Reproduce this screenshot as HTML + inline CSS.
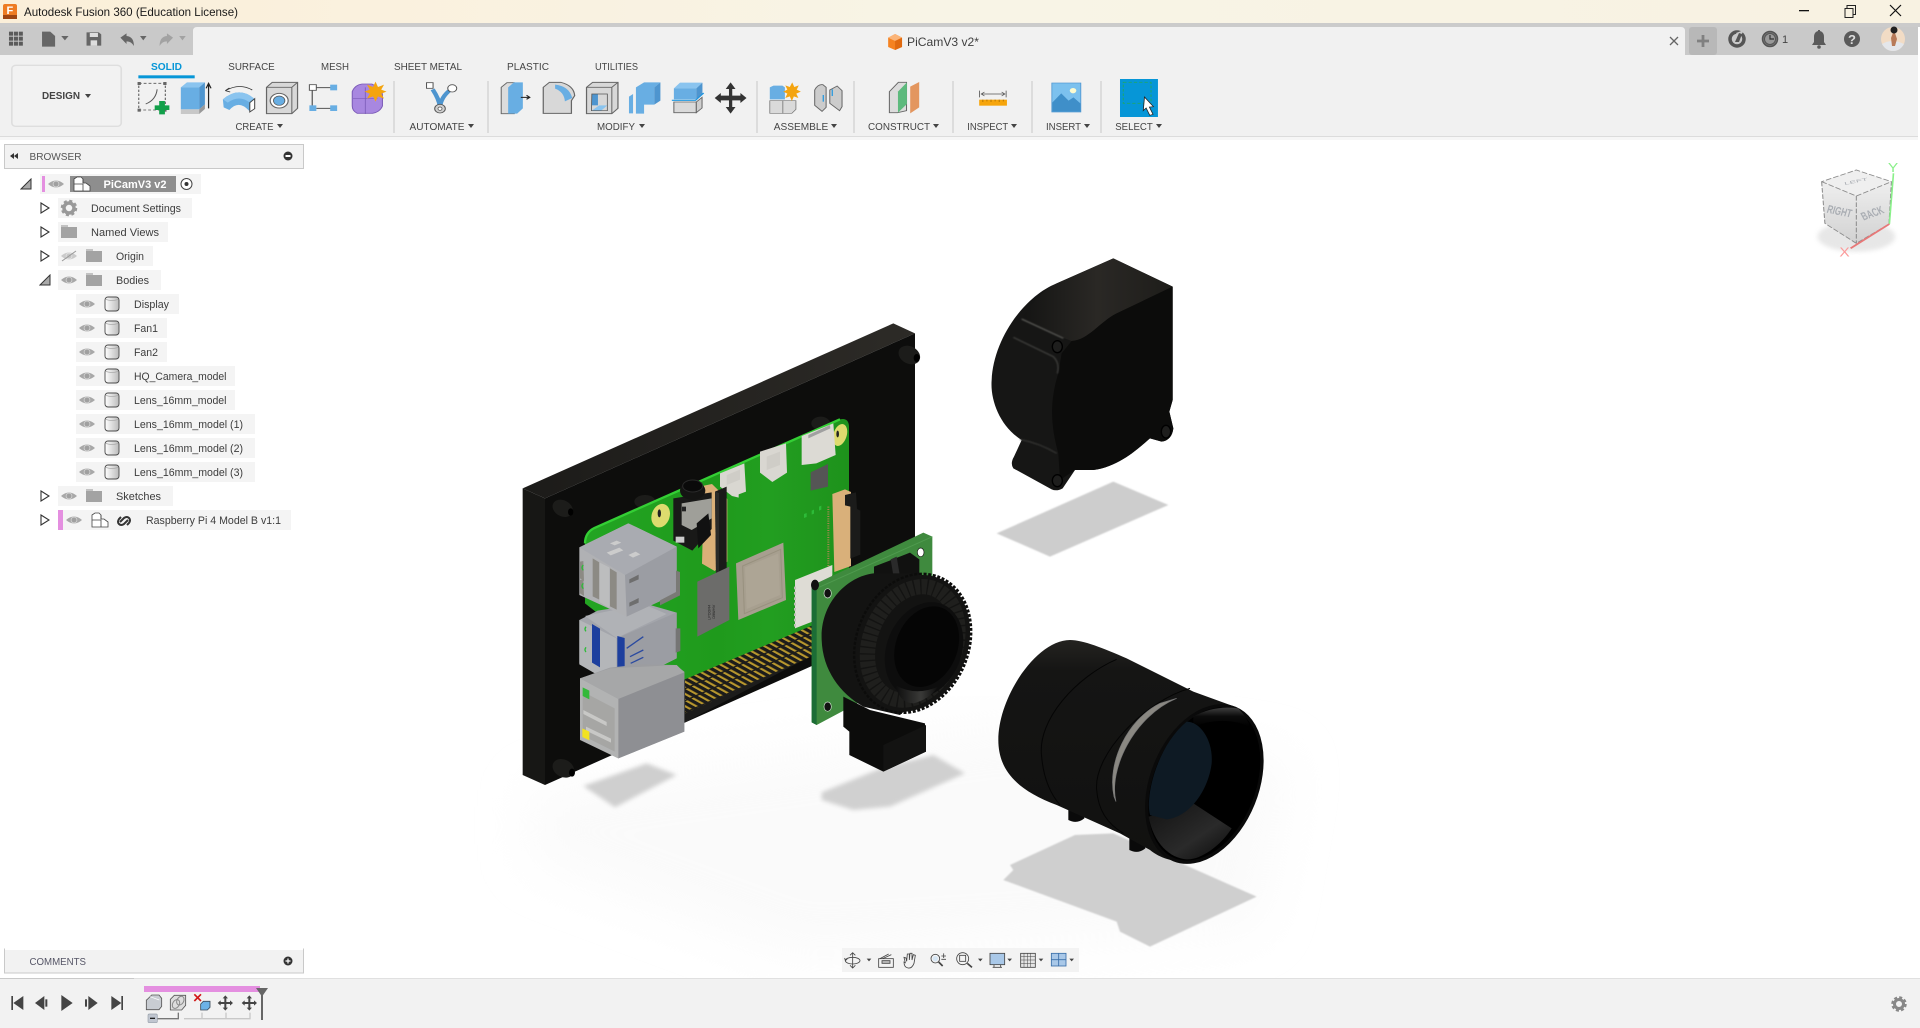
<!DOCTYPE html>
<html lang="en"><head><meta charset="utf-8"><title>Autodesk Fusion 360</title>
<style>
html,body{margin:0;padding:0;background:#fff;width:1920px;height:1028px;overflow:hidden}
svg{display:block}
text{font-family:"Liberation Sans",sans-serif;fill:#3f3f3f}
.l{font-size:10px;fill:#444;text-anchor:middle}
.r{font-size:10.6px;fill:#3d3d3d}
</style></head><body>
<svg width="1920" height="1028" viewBox="0 0 1920 1028" xmlns="http://www.w3.org/2000/svg">
<defs>
<filter id="b2"><feGaussianBlur stdDeviation="2"/></filter>
<filter id="b20"><feGaussianBlur stdDeviation="25"/></filter>
<filter id="b6"><feGaussianBlur stdDeviation="6"/></filter>
<linearGradient id="cream" x1="0" x2="1" y1="0" y2="0"><stop offset="0" stop-color="#fbefd9"/><stop offset=".5" stop-color="#f8f4e6"/><stop offset="1" stop-color="#f8f2e2"/></linearGradient>
<linearGradient id="brd" x1="0" x2="1" y1="0" y2="0"><stop offset="0" stop-color="#23a522"/><stop offset=".5" stop-color="#1f9a1c"/><stop offset=".7" stop-color="#229e20"/><stop offset="1" stop-color="#1e921c"/></linearGradient>
<linearGradient id="ptop" x1="0" x2="1" y1="0" y2="0"><stop offset="0" stop-color="#1c1b19"/><stop offset="1" stop-color="#2d2b27"/></linearGradient>
<linearGradient id="ftop" x1="0" x2="1" y1="0" y2="0"><stop offset="0" stop-color="#141413"/><stop offset=".5" stop-color="#2a2825"/><stop offset="1" stop-color="#1e1d1a"/></linearGradient>
<linearGradient id="lens" x1="0" x2="0" y1="0" y2="1"><stop offset="0" stop-color="#242320"/><stop offset=".14" stop-color="#151514"/><stop offset="1" stop-color="#111110"/></linearGradient>
<linearGradient id="in1" x1="0" x2="0" y1="0" y2="1"><stop offset="0" stop-color="#5a5a5a"/><stop offset=".45" stop-color="#111"/><stop offset="1" stop-color="#000"/></linearGradient>
<linearGradient id="in2" x1="0" x2="1" y1="0" y2="1"><stop offset="0" stop-color="#121212"/><stop offset=".6" stop-color="#2a2a2a"/><stop offset="1" stop-color="#0a0a0a"/></linearGradient>
<linearGradient id="in3" x1="0" x2="1" y1="0" y2="0"><stop offset="0" stop-color="#0c0c0c"/><stop offset=".6" stop-color="#3a3a38"/><stop offset="1" stop-color="#0c0c0c"/></linearGradient>
<linearGradient id="cube" x1="0" x2="0" y1="0" y2="1"><stop offset="0" stop-color="#f4f4f4"/><stop offset="1" stop-color="#d2d2d2"/></linearGradient>
<linearGradient id="body" x1="0" x2="1" y1="0" y2="0"><stop offset="0" stop-color="#fff"/><stop offset="1" stop-color="#bbb"/></linearGradient>
<pattern id="pins" patternUnits="userSpaceOnUse" width="10" height="10" patternTransform="matrix(1.85 -.81 3.6 2 555 1100)"><rect x="0" y="0.700" width="4.200" height="8.700" fill="#b8982f"/><rect x="3.400" y="0.700" width=".8" height="8.700" fill="#6e5718"/></pattern>
<symbol id="eye" viewBox="-9 -6 18 12" width="18" height="12" overflow="visible"><path d="M-8 0Q0-7 8 0Q0 7-8 0Z" fill="#a8a8a8"/><circle r="3.300" fill="#d4d4d4"/><circle r="2.500" fill="#a0a0a0"/></symbol>
<symbol id="folder" viewBox="0 0 16 13" width="16" height="13"><path d="M0 0h7v2h9v11H0z" fill="#a3a3a3"/><path d="M0 2h7V0H0z" fill="#c2c2c2"/></symbol>
<symbol id="bd" viewBox="0 0 16 16" width="16" height="16"><rect x="1" y="1" width="14" height="14" rx="3" fill="url(#body)" stroke="#4a4a4a" stroke-width=".9"/><path d="M2 3.500Q8 5.500 14 3.500" fill="none" stroke="#aaa" stroke-width=".7"/></symbol>
<symbol id="comp" viewBox="0 0 18 16" width="18" height="16"><path d="M1 7V3l3-2h4l2 2v4h3l4 3v5H1z" fill="#fff" stroke="#444" stroke-width=".8"/><path d="M1 8h9v7M10 3v4" fill="none" stroke="#444" stroke-width=".8"/></symbol>
<symbol id="tri" viewBox="0 0 10 12" width="10" height="12"><path d="M1 1L9 6L1 11Z" fill="#fff" stroke="#333" stroke-width="1.100"/></symbol>
<symbol id="tridn" viewBox="0 0 12 12" width="12" height="12"><path d="M1 11L11 1V11Z" fill="#aaa" stroke="#333" stroke-width="1"/></symbol>
</defs>

<!-- chrome -->
<rect width="1920" height="23" fill="url(#cream)"/>
<rect y="23" width="1920" height="4" fill="#cbcbcb"/>
<rect y="27" width="1918" height="28" fill="#c9c9c9"/>
<path d="M193 55V31q0-4 4-4H1681q4 0 4 4V55z" fill="#f1f1f1"/>
<rect x="1689" y="27" width="28" height="28" rx="3" fill="#b8b8b8"/>
<rect y="55" width="1918" height="81" fill="#f1f1f1"/>
<rect y="136" width="1918" height="1" fill="#dcdcdc"/>
<rect y="137" width="1918" height="3" fill="#f6f6f6"/>

<!-- title bar -->
<rect x="3" y="4" width="14" height="15" rx="2" fill="#ee7b22"/><rect x="3" y="15" width="14" height="4" fill="#9e4512"/>
<text x="6.500" y="14" font-size="11" font-weight="700" style="fill:#fff">F</text>
<text x="24" y="16" font-size="12" textLength="214" lengthAdjust="spacingAndGlyphs" style="fill:#1a1a1a">Autodesk Fusion 360 (Education License)</text>
<rect x="1799" y="10" width="10" height="1.300" fill="#111"/>
<path d="M1845 8.500h8v9h-8zM1847 8V5.500h8.500v9H1853" fill="none" stroke="#222" stroke-width="1"/>
<path d="M1890 5l11 11M1901 5l-11 11" stroke="#111" stroke-width="1.200"/>

<!-- toolbar left icons & tabs zoomed coordinates -->
<g transform="scale(.40816,.33333)">
<g fill="#5a5a5a"><rect x="22" y="95" width="10" height="12"/><rect x="34" y="95" width="10" height="12"/><rect x="46" y="95" width="10" height="12"/><rect x="22" y="110" width="10" height="12"/><rect x="34" y="110" width="10" height="12"/><rect x="46" y="110" width="10" height="12"/><rect x="22" y="125" width="10" height="12"/><rect x="34" y="125" width="10" height="12"/><rect x="46" y="125" width="10" height="12"/></g>
<path d="M103 95h20l12 13v32h-32z" fill="#666"/><path d="M150 108h18l-9 13z" fill="#666"/>
<path d="M212 97h30l6 6v34h-36z" fill="#666"/><rect x="220" y="99" width="20" height="12" fill="#ddd"/><rect x="222" y="121" width="16" height="16" fill="#ddd"/>
<path d="M295 113l15-13v8q18 2 18 30q-6-14-18-14v8z" fill="#666"/><path d="M343 108h16l-8 13z" fill="#666"/>
<path d="M424 113l-15-13v8q-18 2-18 30q6-14 18-14v8z" fill="#a2a2a2"/><path d="M439 108h16l-8 13z" fill="#a2a2a2"/>

<rect x="29" y="196" width="268" height="183" rx="10" fill="#f2f2f2" stroke="#dedede" stroke-width="4"/>
<rect x="339" y="226" width="138" height="9" fill="#0696d7"/>

<!-- sketch -->
<rect x="340" y="250" width="65" height="80" fill="none" stroke="#555" stroke-width="2.500" stroke-dasharray="7 5"/>
<g fill="#666"><rect x="337" y="246" width="8" height="9"/><rect x="400" y="246" width="8" height="9"/><rect x="337" y="326" width="8" height="9"/><rect x="400" y="326" width="8" height="9"/></g>
<path d="M385 268Q382 300 357 312" fill="none" stroke="#555" stroke-width="2.500"/>
<path d="M390 303h14v13h11v14h-11v13h-14v-13h-11v-14h11z" fill="#12a04a"/>
<!-- extrude -->
<path d="M443 262l15-15h44l-14 15z" fill="#8ac4ef"/><rect x="443" y="262" width="45" height="66" fill="#68aee3"/><path d="M488 262l14-15v66l-14 15z" fill="#4e95cf"/><path d="M443 328h45v14h-45z" fill="#c8c8c8"/><path d="M488 328l14-15v14l-14 15z" fill="#999"/>
<path d="M511 325V252M505 265l6-15 6 15" fill="none" stroke="#222" stroke-width="3"/>
<!-- revolve -->
<path d="M546 298Q585 258 622 295V325L610 332Q585 298 562 330L548 322Z" fill="#68aee3"/><path d="M546 298Q585 258 622 295L610 306Q585 284 558 308Z" fill="#8ac4ef"/>
<path d="M612 308l12-12v30l-12 10z" fill="#fff" stroke="#444" stroke-width="2.500"/>
<path d="M552 272q35-24 66-2M552 272l10-8M552 272l12 4" fill="none" stroke="#333" stroke-width="2.500"/>
<!-- hole -->
<path d="M653 262l14-15h62v78l-14 16h-62z" fill="#d8d8d8" stroke="#666" stroke-width="3"/><path d="M653 262h62v79M715 262l14-15" fill="none" stroke="#666" stroke-width="2.500"/>
<ellipse cx="684" cy="302" rx="22" ry="22" fill="#fff" stroke="#666" stroke-width="3"/><ellipse cx="684" cy="302" rx="14" ry="14" fill="#68aee3" stroke="#555" stroke-width="2"/>
<!-- pattern -->
<path d="M775 263h42M765 270v47M775 325h42" stroke="#555" stroke-width="3"/>
<rect x="758" y="254" width="17" height="17" fill="#fff" stroke="#555" stroke-width="2.500"/>
<rect x="809" y="254" width="17" height="17" fill="#68aee3"/><rect x="758" y="316" width="17" height="17" fill="#68aee3"/><rect x="809" y="316" width="17" height="17" fill="#68aee3"/>
<!-- form -->
<path d="M863 275q6-20 24-23h24q26 14 26 34v32q-6 18-24 22h-38q-12-8-12-22z" fill="#a887e0" stroke="#7c5bb8" stroke-width="2.500"/>
<path d="M865 295h60M895 262v80" stroke="#7c5bb8" stroke-width="2"/>
<path d="M920 245l6 16 15-7-7 15 13 6-13 6 7 15-15-7-6 16-6-16-15 7 7-15-13-6 13-6-7-15 15 7z" fill="#f4a40f"/>
<!-- automate -->
<path d="M1060 268q16 30 18 52M1105 268q-24 22-27 52" fill="none" stroke="#4e95cf" stroke-width="11"/>
<rect x="1045" y="248" width="16" height="17" fill="#fff" stroke="#555" stroke-width="2.500"/><circle cx="1108" cy="265" r="11" fill="#fff" stroke="#555" stroke-width="2.500"/>
<ellipse cx="1078" cy="326" rx="13" ry="13" fill="#d0d0d0" stroke="#555" stroke-width="2.500"/><circle cx="1078" cy="326" r="5" fill="#fff" stroke="#555" stroke-width="2"/>
<!-- press pull -->
<path d="M1228 262l14-14h18v93h-32z" fill="#dcdcdc" stroke="#666" stroke-width="2.500"/><path d="M1245 262l14-15h22v78l-14 16h-22z" fill="#68aee3"/>
<path d="M1276 292h22M1290 286l8 6-8 6" fill="none" stroke="#222" stroke-width="3"/>
<!-- fillet -->
<path d="M1331 262l15-15h28q32 10 34 40l-8 15v38h-69z" fill="#d8d8d8" stroke="#666" stroke-width="3"/><path d="M1360 254q34 4 42 40l-18 10q-2-28-24-38z" fill="#68aee3"/>
<!-- shell -->
<path d="M1437 262l15-15h62v78l-15 16h-62z" fill="#d8d8d8" stroke="#666" stroke-width="3"/><path d="M1437 262h62v79M1499 262l15-15" fill="none" stroke="#666" stroke-width="2.500"/>
<path d="M1450 282h15v34h-15z" fill="#4e95cf"/><path d="M1450 332l18-16h20l-15 16z" fill="#8ac4ef"/><path d="M1450 282l-1 50h39v-50z" fill="none" stroke="#555" stroke-width="2"/>
<path d="M1541 340v-50l10-8v58z" fill="#68aee3"/>
</g>

<g transform="translate(640,0) scale(.40816,.33333)">
<path d="M-10 262l20-15h40l-15 15v52h-25v27h-20z" fill="#68aee3"/><path d="M35 262l15-15v55l-15 12z" fill="#4e95cf"/>
<path d="M83 265l15-17h55l-15 17z" fill="#8ac4ef"/><rect x="83" y="265" width="55" height="33" fill="#68aee3"/><path d="M138 265l15-17v35l-15 15z" fill="#4e95cf"/>
<path d="M78 301h58l20-22" fill="none" stroke="#1e96e0" stroke-width="3.500"/>
<path d="M83 306h55v32H83z" fill="#dadada" stroke="#666" stroke-width="2.500"/><path d="M138 306l14-14v32l-14 14z" fill="#cfcfcf" stroke="#666" stroke-width="2.500"/>
<path d="M222 247l12 20h-8v20h20v-8l15 15-15 15v-8h-20v20h8l-12 20-12-20h8v-20h-20v8l-15-15 15-15v8h20v-20h-8z" fill="#333"/>
<path d="M318 262l9-5h22l6 5v36h-37z" fill="#68aee3"/><path d="M318 302h32v38h-32z" fill="#dadada" stroke="#777" stroke-width="2"/><path d="M350 302h32v26l-10 12h-22z" fill="#dadada" stroke="#777" stroke-width="2"/>
<path d="M373 247l5 14 11-5-5 13 10 6-11 6 5 13-11-5-5 14-5-14-11 5 5-13-10-6 10-6-5-13 11 5z" fill="#f4a40f"/>
<path d="M428 270q8-18 20-16l8 8v60l-10 12-18-18z" fill="#ccc" stroke="#666" stroke-width="2.500"/><path d="M465 270l18-12 12 14v48l-6 12-24-22z" fill="#ccc" stroke="#666" stroke-width="2.500"/>
<path d="M449 285v20" stroke="#1e96e0" stroke-width="3"/><path d="M471 268v20" stroke="#1e96e0" stroke-width="3"/>
<path d="M611 275l22-28h20v85l-22 6h-20z" fill="#dcdcdc" stroke="#666" stroke-width="2.500"/><path d="M632 275l22-28v65l-22 26z" fill="#5dba7d"/>
<path d="M662 260l22-14v76l-22 18z" fill="#e3965f"/>
<path d="M832 272v20M897 272v20M836 282h58M844 276l-8 6 8 6M886 276l8 6-8 6" fill="none" stroke="#555" stroke-width="2"/>
<rect x="831" y="299" width="68" height="18" fill="#f6a50c"/><path d="M840 299v7M850 299v5M860 299v7M870 299v5M880 299v7M890 299v5" stroke="#a86c00" stroke-width="2"/>
<rect x="1009" y="249" width="71" height="87" fill="#7cc1ee" stroke="#4e95cf" stroke-width="2"/>
<path d="M1010 335v-27l22-28 18 22 12-10 17 18v25z" fill="#3f8fc9"/><circle cx="1061" cy="272" r="8" fill="#fdfbd0"/>
<rect x="1176" y="237" width="93" height="114" fill="#0696d7"/>
<rect x="1184" y="247" width="68" height="63" fill="none" stroke="#1fa56c" stroke-width="2.500" stroke-dasharray="8 5"/>
<path d="M1236 291l22 29-10 1 9 22-8 3-9-22-7 8z" fill="#fff" stroke="#222" stroke-width="2"/>
<!-- doc cube -->
<path d="M625 102l17 11v28l-17 9-17-9v-28z" fill="#f58220"/><path d="M625 102l17 11-17 10-17-10z" fill="#fbb478"/><path d="M625 123l17-10v28l-17 9z" fill="#e06a10"/>
</g>

<!-- separators -->
<g fill="#dcdcdc"><rect x="393" y="81" width="2" height="52"/><rect x="487" y="81" width="2" height="52"/><rect x="756" y="81" width="2" height="52"/><rect x="853" y="81" width="2" height="52"/><rect x="952" y="81" width="2" height="52"/><rect x="1031" y="81" width="2" height="52"/><rect x="1100" y="81" width="2" height="52"/></g>

<!-- tabs text -->
<text x="166.500" y="70" class="l" textLength="31" lengthAdjust="spacingAndGlyphs" font-weight="700" style="fill:#0696d7">SOLID</text>
<text x="251.500" y="70" class="l" textLength="46.500" lengthAdjust="spacingAndGlyphs">SURFACE</text>
<text x="335" y="70" class="l" textLength="28" lengthAdjust="spacingAndGlyphs">MESH</text>
<text x="428" y="70" class="l" textLength="68" lengthAdjust="spacingAndGlyphs">SHEET METAL</text>
<text x="528" y="70" class="l" textLength="42" lengthAdjust="spacingAndGlyphs">PLASTIC</text>
<text x="616.500" y="70" class="l" textLength="43" lengthAdjust="spacingAndGlyphs">UTILITIES</text>
<text x="61" y="99" font-size="10.500" font-weight="700" text-anchor="middle" textLength="38" lengthAdjust="spacingAndGlyphs" style="fill:#444">DESIGN</text>
<path d="M85 94h6l-3 4z" fill="#444"/>

<text x="254.500" y="130" class="l" textLength="38" lengthAdjust="spacingAndGlyphs">CREATE</text><path d="M277 124h6l-3 4z" fill="#444"/>
<text x="437" y="130" class="l" textLength="55" lengthAdjust="spacingAndGlyphs">AUTOMATE</text><path d="M468 124h6l-3 4z" fill="#444"/>
<text x="616" y="130" class="l" textLength="38" lengthAdjust="spacingAndGlyphs">MODIFY</text><path d="M639 124h6l-3 4z" fill="#444"/>
<text x="801" y="130" class="l" textLength="54.500" lengthAdjust="spacingAndGlyphs">ASSEMBLE</text><path d="M831 124h6l-3 4z" fill="#444"/>
<text x="899" y="130" class="l" textLength="62" lengthAdjust="spacingAndGlyphs">CONSTRUCT</text><path d="M933 124h6l-3 4z" fill="#444"/>
<text x="987.700" y="130" class="l" textLength="41" lengthAdjust="spacingAndGlyphs">INSPECT</text><path d="M1011 124h6l-3 4z" fill="#444"/>
<text x="1063.500" y="130" class="l" textLength="35" lengthAdjust="spacingAndGlyphs">INSERT</text><path d="M1084 124h6l-3 4z" fill="#444"/>
<text x="1134" y="130" class="l" textLength="37.500" lengthAdjust="spacingAndGlyphs">SELECT</text><path d="M1156 124h6l-3 4z" fill="#444"/>

<!-- document tab text -->
<text x="907" y="46" font-size="12" textLength="72" lengthAdjust="spacingAndGlyphs" style="fill:#3f3f3f">PiCamV3 v2*</text>
<path d="M1670 37l8 8M1678 37l-8 8" stroke="#666" stroke-width="1.300"/>
<path d="M1697 41h12M1703 35v12" stroke="#808080" stroke-width="2.800"/>

<!-- right icons -->
<circle cx="1737" cy="39" r="7" fill="none" stroke="#555" stroke-width="3.500"/><path d="M1736 33l8-3-5 9z" fill="#c9c9c9"/><path d="M1735 42l4-9 3 1-3 8z" fill="#555"/>
<circle cx="1770" cy="39" r="7.500" fill="#777" stroke="#555" stroke-width="1.500"/><circle cx="1770" cy="39" r="5.500" fill="#999" stroke="#555" stroke-width="1"/><path d="M1770 35v4h4" fill="none" stroke="#333" stroke-width="1.200"/>
<text x="1782" y="43" font-size="11" style="fill:#444">1</text>
<path d="M1812 45h14l-2-3v-5q0-5-4-6v-1h-2v1q-4 1-4 6v5z" fill="#5a5a5a"/><circle cx="1819" cy="47" r="1.800" fill="#5a5a5a"/>
<circle cx="1852" cy="39" r="8" fill="#5a5a5a"/><text x="1852" y="44" font-size="13" font-weight="700" text-anchor="middle" style="fill:#ddd">?</text>
<circle cx="1893" cy="39" r="12" fill="#f2dcc5"/><path d="M1882 44q10-6 22 0q-4 7-11 7t-11-7z" fill="#e4e6ea"/><path d="M1891 38l3-8 3 9-2 7h-3z" fill="#b87a58"/><circle cx="1894" cy="30" r="3.500" fill="#222"/>

<!-- browser panel -->
<rect x="4.500" y="144.500" width="299" height="24" fill="#f2f2f2" stroke="#c9c9c9"/>
<path d="M10 156l4-3v6zM14 156l4-3v6z" fill="#333"/>
<text x="29.500" y="160" font-size="10" textLength="52" lengthAdjust="spacingAndGlyphs" style="fill:#555">BROWSER</text>
<circle cx="288" cy="156" r="4.500" fill="#333"/><rect x="285.500" y="155" width="5" height="2" fill="#fff"/>

<g fill="#f4f4f4">
<rect x="40" y="174" width="161" height="20"/><rect x="58" y="198" width="134" height="20"/><rect x="58" y="222" width="110" height="20"/><rect x="58" y="246" width="95" height="20"/><rect x="58" y="270" width="103" height="20"/>
<rect x="76" y="294" width="103" height="20"/><rect x="76" y="318" width="91" height="20"/><rect x="76" y="342" width="91" height="20"/><rect x="76" y="366" width="159" height="20"/><rect x="76" y="390" width="159" height="20"/><rect x="76" y="414" width="179" height="20"/><rect x="76" y="438" width="179" height="20"/><rect x="76" y="462" width="179" height="20"/>
<rect x="58" y="486" width="115" height="20"/><rect x="58" y="510" width="233" height="20"/>
</g>
<use href="#tridn" x="20" y="178"/>
<rect x="42" y="176" width="3" height="16" fill="#e48fe0"/>
<use href="#eye" x="47" y="178"/>
<rect x="70" y="176" width="106" height="16" fill="#8e8e8e"/>
<use href="#comp" x="73" y="176"/>
<text x="135" y="188" font-size="10.800" font-weight="700" text-anchor="middle" textLength="63" lengthAdjust="spacingAndGlyphs" style="fill:#fff">PiCamV3 v2</text>
<circle cx="186.500" cy="184" r="5.500" fill="#fff" stroke="#444"/><circle cx="186.500" cy="184" r="2" fill="#333"/>

<use href="#tri" x="40" y="202"/>
<g transform="translate(69,208)"><circle r="5" fill="none" stroke="#999" stroke-width="3.500"/><circle r="7" fill="none" stroke="#999" stroke-width="2.500" stroke-dasharray="3 2.500"/></g>
<text x="91" y="212" class="r" textLength="90" lengthAdjust="spacingAndGlyphs">Document Settings</text>
<use href="#tri" x="40" y="226"/><use href="#folder" x="61" y="225"/>
<text x="91" y="236" class="r" textLength="68" lengthAdjust="spacingAndGlyphs">Named Views</text>
<use href="#tri" x="40" y="250"/>
<g transform="translate(60,250)"><use href="#eye" opacity=".55"/><path d="M2 11L16 1" stroke="#999" stroke-width="1"/></g>
<use href="#folder" x="86" y="249"/>
<text x="116" y="260" class="r" textLength="28" lengthAdjust="spacingAndGlyphs">Origin</text>
<use href="#tridn" x="39" y="274"/><use href="#eye" x="60" y="274"/><use href="#folder" x="86" y="273"/>
<text x="116" y="284" class="r" textLength="33" lengthAdjust="spacingAndGlyphs">Bodies</text>

<use href="#eye" x="78" y="298"/><use href="#bd" x="104" y="296"/><text x="134" y="308" class="r" textLength="35" lengthAdjust="spacingAndGlyphs">Display</text>
<use href="#eye" x="78" y="322"/><use href="#bd" x="104" y="320"/><text x="134" y="332" class="r" textLength="24" lengthAdjust="spacingAndGlyphs">Fan1</text>
<use href="#eye" x="78" y="346"/><use href="#bd" x="104" y="344"/><text x="134" y="356" class="r" textLength="24" lengthAdjust="spacingAndGlyphs">Fan2</text>
<use href="#eye" x="78" y="370"/><use href="#bd" x="104" y="368"/><text x="134" y="380" class="r" textLength="92.500" lengthAdjust="spacingAndGlyphs">HQ_Camera_model</text>
<use href="#eye" x="78" y="394"/><use href="#bd" x="104" y="392"/><text x="134" y="404" class="r" textLength="92.500" lengthAdjust="spacingAndGlyphs">Lens_16mm_model</text>
<use href="#eye" x="78" y="418"/><use href="#bd" x="104" y="416"/><text x="134" y="428" class="r" textLength="109" lengthAdjust="spacingAndGlyphs">Lens_16mm_model (1)</text>
<use href="#eye" x="78" y="442"/><use href="#bd" x="104" y="440"/><text x="134" y="452" class="r" textLength="109" lengthAdjust="spacingAndGlyphs">Lens_16mm_model (2)</text>
<use href="#eye" x="78" y="466"/><use href="#bd" x="104" y="464"/><text x="134" y="476" class="r" textLength="109" lengthAdjust="spacingAndGlyphs">Lens_16mm_model (3)</text>

<use href="#tri" x="40" y="490"/><use href="#eye" x="60" y="490"/><use href="#folder" x="86" y="489"/>
<text x="116" y="500" class="r" textLength="45" lengthAdjust="spacingAndGlyphs">Sketches</text>
<use href="#tri" x="40" y="514"/><rect x="58" y="510" width="5" height="20" fill="#e48fe0"/><use href="#eye" x="65" y="514"/><use href="#comp" x="91" y="512"/>
<path d="M120 521l4-4q3-2 5 0t0 5l-2 2M128 519l-4 4q-3 2-5 0t0-5l2-2" fill="none" stroke="#333" stroke-width="2" transform="translate(0,1)"/>
<text x="146" y="524" class="r" textLength="135" lengthAdjust="spacingAndGlyphs">Raspberry Pi 4 Model B v1:1</text>

<!-- viewcube -->
<g transform="translate(1280,0) scale(.40816,.33333)">
<ellipse cx="1412" cy="710" rx="95" ry="45" fill="#aaa" opacity=".28" filter="url(#b6)"/>
<path d="M1412 510l86 35-6 127-80 58-77-60-8-125z" fill="url(#cube)"/>
<path d="M1327 545l85-35 86 35-86 43z" fill="#efefef"/>
<path d="M1327 545l85 43 86-43M1412 588v142M1327 545l8 125 77 60 80-58 6-127-86-35z" fill="none" stroke="#8a8a8a" stroke-width="2.500" stroke-dasharray="14 5"/>
<text transform="translate(1368,645) rotate(14) scale(.58,1)" font-size="34" font-weight="700" text-anchor="middle" style="fill:#a9adb3">RIGHT</text>
<text transform="translate(1456,650) rotate(-24) scale(.58,1)" font-size="34" font-weight="700" text-anchor="middle" style="fill:#a9adb3">BACK</text>
<text transform="translate(1412,548) rotate(-14) scale(1,.5)" font-size="24" text-anchor="middle" style="fill:#a9adb3">LEFT</text>
<path d="M1503 520l-10 152" stroke="#8af08a" stroke-width="4"/>
<path d="M1493 672l-95 73" stroke="#e87878" stroke-width="5"/>
<text x="1502" y="516" font-size="38" text-anchor="middle" style="fill:#8af08a">Y</text>
<text x="1383" y="770" font-size="38" text-anchor="middle" style="fill:#fb9a9a">X</text>
</g>

<!-- 3D: ground haze -->
<path d="M530 790L1020 720 1290 760 1260 930 800 960 530 860z" fill="#f6f6f6" opacity=".5" filter="url(#b20)"/>

<!-- plate + pi + camera -->
<g transform="translate(500,310) scale(.33333)">
<path d="M250 1428L440 1360 530 1395 345 1492z" fill="#cfcfcf" filter="url(#b6)"/>
<path d="M965 1447L1150 1372 1300 1335 1395 1390 1170 1490 1060 1500 965 1470z" fill="#d0d0d0" filter="url(#b6)"/>

<path d="M68 535L1180 40 1245 70 135 565z" fill="url(#ptop)"/>
<path d="M135 565L1245 70V930L135 1425z" fill="#0d0d0c"/>
<path d="M68 535l67 30v860l-67-30z" fill="#171715"/>
<g fill="#1c1c1a"><ellipse cx="188" cy="595" rx="32" ry="24" transform="rotate(28 188 595)"/><ellipse cx="1228" cy="135" rx="34" ry="26" transform="rotate(28 1228 135)"/><ellipse cx="190" cy="1375" rx="34" ry="26" transform="rotate(28 190 1375)"/></g>
<ellipse cx="212" cy="606" rx="8" ry="11" fill="#000"/><ellipse cx="1250" cy="144" rx="9" ry="12" fill="#000"/><ellipse cx="216" cy="1388" rx="9" ry="12" fill="#000"/>
<ellipse cx="435" cy="575" rx="32" ry="20" fill="#1c1c1a"/><ellipse cx="962" cy="340" rx="28" ry="20" fill="#1c1c1a"/>

<!-- pin header base -->
<path d="M555 1105L940 945V1035L555 1237z" fill="#1c1c1b"/>
<path d="M555 1105L940 945V1040L555 1210z" fill="url(#pins)"/>

<!-- board -->
<path d="M255 690q0-24 25-35L1020 328q25-6 27 20V780L940 945 550 1110 255 880z" fill="url(#brd)"/>
<path d="M255 700q0-32 28-46L1020 328" fill="none" stroke="#34cf35" stroke-width="7"/>
<ellipse cx="482" cy="617" rx="27" ry="36" fill="#dddb6e" transform="rotate(18 482 617)"/><ellipse cx="478" cy="610" rx="5" ry="12" fill="#222"/>
<ellipse cx="1020" cy="375" rx="20" ry="34" fill="#dddb6e" transform="rotate(18 1020 375)"/><ellipse cx="1013" cy="372" rx="4" ry="10" fill="#222"/>
<path d="M912 612l8-3v12l-8 3zM935 602l7-3v12l-7 3zM957 590l7-3v12l-7 3z" fill="#2dbb38"/>
<path d="M932 487l52-25v68l-52 12z" fill="#555"/>

<!-- connectors top -->
<path d="M660 490l73-30 5 85-22 8v10l-20-5-36-28z" fill="#d9d7d1"/><path d="M680 495l40-16v30l-40 16z" fill="#cfcdc7"/>
<path d="M780 425l78-25 3 88-44 28-37-28z" fill="#d9d7d1"/><path d="M800 440l40-15v40l-40 15z" fill="#cfcdc7"/>
<path d="M905 378l95-38 7 95-58 25-44 5z" fill="#dcdad4"/><path d="M925 375l65-30 1 10-66 30z" fill="#a0a0a0"/>

<!-- FPC left -->
<path d="M612 527l24-5 46 45v188l-38 28-38-22z" fill="#dbb078"/>
<path d="M645 545l35-15v250l-32 15z" fill="#1a1a19"/><path d="M645 545l12 4v246l-9 0z" fill="#2a2a28"/>
<!-- jack -->
<path d="M520 565l115-18v110l-58 65-57-30z" fill="#191918"/>
<path d="M545 580l90-15v60l-60 35-30-15z" fill="#9f9f99"/>
<ellipse cx="578" cy="542" rx="38" ry="28" fill="#141413"/><ellipse cx="578" cy="528" rx="30" ry="18" fill="#0a0a0a" stroke="#2a2a2a" stroke-width="3"/>
<path d="M590 640l35-30 8 65-38 40z" fill="#111"/><rect x="527" y="680" width="26" height="18" fill="#ccc"/><rect x="546" y="590" width="12" height="14" fill="#222"/>

<!-- FPC right -->
<path d="M997 552l38-14 18 8v222l-50 18z" fill="#d9b07a"/>
<path d="M985 590v190" stroke="#a8884f" stroke-width="6" stroke-dasharray="3 4"/>
<path d="M1035 555l33-8 3 50 10 5v132l-30 12V590l-16-4z" fill="#1b1b1a"/>

<!-- chips -->
<path d="M592 815l96-45v160l-96 50z" fill="#6c6c6a"/>
<path d="M708 760l142-62 8 172-143 60z" fill="#a79f8f"/><path d="M735 772l100-42 5 125-100 42z" fill="#ada595"/><path d="M728 768l114-50 5 145-114 48z" fill="none" stroke="#98917f" stroke-width="3"/>
<g transform="translate(632,930) rotate(-90) scale(.9,.9)"><text font-size="13" style="fill:#222">LPDDR4</text><text y="14" font-size="13" x="4" style="fill:#222">D9WHV</text></g>

<!-- white conn near camera -->
<path d="M885 810l112-45v30l-60 140-52 20z" fill="#dedcd5"/><path d="M885 830v125" stroke="#c2c0b8" stroke-width="6" stroke-dasharray="8 8"/>

<!-- USB 3 (middle) -->
<path d="M238 930l55-28 140-22 97 28v137l-160 80-132-65z" fill="#a3a5ab"/>
<path d="M255 918l175-36 70 30-150 72z" fill="#b0b2b6"/>
<path d="M238 930l112 55v143l-112-65z" fill="#b4b6b9"/>
<path d="M350 985l180-78v137l-180 84z" fill="#9b9da3"/>
<path d="M527 955l14 0v68l-14 5z" fill="#757575"/>
<path d="M276 942l24 14v116l-24-14z" fill="#1d3f9e"/><path d="M352 978l22 6v120l-22 8z" fill="#1d3f9e"/>
<path d="M380 1015l50-35M390 1040l40-20M392 1060l38-18M385 1090l45-10" stroke="#2a4aa0" stroke-width="4" fill="none"/>
<path d="M258 950q-6 8 0 14M258 1012q-6 8 0 14" stroke="#2dbb38" stroke-width="4" fill="none"/>

<!-- USB 2 (top) -->
<path d="M238 712L385 640l145 70v140L380 920l-142-65z" fill="#b0b1b4"/>
<path d="M238 712L385 640l145 70-155 85z" fill="#a9abb1"/>
<path d="M375 795l155-85v140L380 920z" fill="#9b9da3"/>
<path d="M528 782l12 4v70l-60 30v-15l48-25z" fill="#7a7a76"/>
<path d="M278 745l20 12v112l-20-10zM330 775l20 12v112l-20-10zM240 755v50l12 8-2-60zM240 810v40l12 8-2-50z" fill="#8c8a84"/>
<path d="M298 757l30 15v122l-30-18z" fill="#bcbdbe"/>
<path d="M330 700l20-8 14 6-20 8zM385 735l22-10 14 8-22 10zM320 728l38-15 12 8-38 15z" fill="#ccc"/>
<path d="M388 808l28-14v14l-28 12zM388 878l28-14v14l-28 12z" fill="#6e6e6e"/>
<path d="M250 765q-8 8 0 16M250 820q-8 8 0 16" stroke="#2dbb38" stroke-width="4" fill="none"/>

<!-- Ethernet -->
<path d="M240 1105l90-32 95-10 100 2 28 20v180l-198 80-115-55z" fill="#9c9da0"/>
<path d="M240 1105l90-30 200-10 23 22-198 80z" fill="#a6a7a8"/>
<path d="M355 1167l198-80v178l-198 80z" fill="#8e8f93"/>
<path d="M240 1105l115 62v178l-115-56z" fill="#b2b3b3"/>
<path d="M248 1145l96 50v130l-96-48z" fill="#a6a6a4"/><path d="M250 1200l70 36v12l-70-36zM258 1250l75 36v12l-75-36z" fill="#c8c8c6"/>
<path d="M248 1132l20 10v26l-20-10z" fill="#34b93a"/><path d="M247 1255l21 10v26l-21-10z" fill="#f2e21f"/>

<!-- camera board -->
<path d="M935 827l335-159 27 12v380L950 1245l-15-8z" fill="#3f8a3e"/>
<path d="M935 827l15 8v410l-15-8z" fill="#1c6d35"/>
<path d="M950 835l347-155" stroke="#4f9a4e" stroke-width="3"/>
<ellipse cx="983" cy="850" rx="11" ry="14" fill="#111" stroke="#cfe0cf" stroke-width="2"/><ellipse cx="983" cy="1190" rx="11" ry="14" fill="#111" stroke="#cfe0cf" stroke-width="2"/><ellipse cx="1262" cy="727" rx="10" ry="13" fill="#fff" stroke="#111" stroke-width="2"/>
<ellipse cx="945" cy="825" rx="12" ry="16" fill="#111"/>

<!-- camera mount -->
<path d="M1030 1160l80 40 165 40 3 85-128 60-102-50v-70l-18-15z" fill="#0c0c0b"/>
<path d="M1150 1385v-80l128-60v80z" fill="#131312"/>
<!-- camera body -->
<path d="M1122 770l108-42 28 20v50l-93 40-43-20z" fill="#111110"/><path d="M1172 748l18-8 10 60-18 8z" fill="#2a2a2a"/>
<path d="M965 990C960 880 1040 800 1120 790L1250 790 1340 850 1330 1100 1200 1215 1090 1190C1020 1150 968 1080 965 990z" fill="#131312"/>
<!-- knurled ring -->
<ellipse cx="1238" cy="1000" rx="168" ry="214" transform="rotate(22 1238 1000)" fill="none" stroke="#0c0c0b" stroke-width="8" stroke-dasharray="9 5"/>
<ellipse cx="1238" cy="1000" rx="165" ry="211" transform="rotate(22 1238 1000)" fill="#131312"/>
<ellipse cx="1238" cy="1000" rx="128" ry="176" transform="rotate(22 1238 1000)" fill="none" stroke="#1f1f1d" stroke-width="46" stroke-dasharray="16 4"/>
<ellipse cx="1272" cy="1020" rx="112" ry="148" transform="rotate(22 1272 1020)" fill="#0d0d0d"/>
<ellipse cx="1280" cy="1010" rx="92" ry="125" transform="rotate(22 1280 1010)" fill="#050505"/>
<path d="M1185 1125q60 35 130 5-30 40-75 50-40 0-55-55z" fill="url(#in3)"/>
</g>

<!-- fan -->
<g transform="translate(960,240) scale(.33333)">
<path d="M110 880L460 725 625 795 270 950z" fill="#cdcdcd" filter="url(#b2)"/>
<path d="M460 55L638 140V480L628 515L640 565Q636 600 605 605L570 595C540 620 480 680 400 690L345 690L308 745Q290 755 275 748L160 685Q150 670 162 650L185 600C120 560 90 480 95 420C100 300 190 170 290 130z" fill="#161615"/>
<path d="M460 55L638 140 470 220C420 245 385 300 335 303L300 290 185 235C215 190 250 150 290 130z" fill="url(#ftop)"/>
<path d="M638 140V480L628 515L640 565Q636 600 605 605L570 595C540 620 480 680 400 690L345 690L300 720L295 640C270 550 270 480 295 400L305 340 335 303C385 300 420 245 470 220z" fill="#0c0c0b"/>
<path d="M185 237L310 295" stroke="#6a6a66" stroke-width="3" filter="url(#b2)"/>
<path d="M160 292L280 350Q300 370 292 400" stroke="#4a4a46" stroke-width="3" fill="none" filter="url(#b2)"/>
<path d="M180 598Q240 610 290 640" stroke="#3a3a38" stroke-width="3" fill="none" filter="url(#b2)"/>
<ellipse cx="292" cy="320" rx="15" ry="18" fill="#1e1e1d" stroke="#000" stroke-width="4"/>
<ellipse cx="292" cy="722" rx="15" ry="18" fill="#1e1e1d" stroke="#000" stroke-width="4"/>
<ellipse cx="618" cy="575" rx="14" ry="19" fill="#1e1e1d" stroke="#000" stroke-width="4"/>
</g>

<!-- big lens -->
<g transform="translate(960,620) scale(.33333)">
<path d="M345 645L460 640 890 830 570 980 480 935 470 905 130 780 160 750 150 735z" fill="#cfcfcf" filter="url(#b2)"/>
<path d="M325 560h48v35q-22 18-48 5z" fill="#0a0a0a"/><path d="M508 655h48v30q-22 18-48 5z" fill="#0a0a0a"/>
<path d="M115 360C115 230 230 60 330 60C370 60 430 85 500 115L700 215L830 262C880 285 910 350 905 430C895 570 780 725 680 725C640 725 600 715 570 690L480 640L290 555C170 510 115 450 115 360z" fill="url(#lens)"/>
<path d="M470 118C350 170 230 300 245 410C250 470 270 520 300 555" fill="none" stroke="#050505" stroke-width="3"/>
<path d="M690 205C560 240 400 400 410 510C415 570 440 610 490 640" fill="none" stroke="#050505" stroke-width="3"/>
<path d="M468 545C445 450 520 290 650 235L600 250C500 300 440 430 462 530z" fill="#8a8882" stroke="#777" stroke-width="2"/>
<ellipse cx="733" cy="492" rx="158" ry="245" transform="rotate(22 733 492)" fill="#000" stroke="#0a0a0a" stroke-width="10"/>
<path d="M700 290Q760 255 835 265Q860 290 870 320Q790 285 700 320z" fill="url(#in1)" opacity=".7"/>
<path d="M566 590L700 550 815 625C780 680 720 720 680 718C630 715 580 670 566 590z" fill="url(#in2)"/>
<path d="M680 305C720 305 760 360 755 430C745 510 690 590 620 598L570 585C555 530 590 380 680 305z" fill="#0e1a24"/>
</g>

<!-- view bar -->
<rect x="842" y="948" width="237" height="24" fill="#f3f3f3"/>
<g transform="translate(830,940) scale(.33333)" fill="none" stroke="#444" stroke-width="2.500">
<path d="M68 38v46M60 46l8-8 8 8M60 76l8 8 8-8"/><ellipse cx="68" cy="62" rx="22" ry="10"/><path d="M46 62l6-6M46 62l-2-8" />
<path d="M110 56h14l-7 8z" fill="#444" stroke="none"/>
<rect x="146" y="56" width="44" height="26"/><rect x="156" y="62" width="24" height="8" fill="#bbb"/><path d="M150 56l26-14M158 56l26-12"/>
<path d="M226 68l-4-16 6 2 2 10 2-22 6 0 0 18 2-20 6 0 0 20 4-16 6 2-4 24q-6 16-18 14t-12-18z"/>
<circle cx="316" cy="56" r="13"/><path d="M326 66l12 12" stroke-width="5"/><circle cx="316" cy="56" r="8" fill="#d6e6f4" stroke="none"/><path d="M334 48h14M341 40v14M334 58h14"/>
<circle cx="398" cy="56" r="18"/><rect x="389" y="46" width="18" height="18"/><path d="M412 70l14 12" stroke-width="5"/>
<path d="M444 56h14l-7 8z" fill="#444" stroke="none"/>
<rect x="480" y="40" width="44" height="34" fill="#a9c8e8"/><path d="M492 74v8h20v-8M488 82h28"/>
<path d="M532 56h14l-7 8z" fill="#444" stroke="none"/>
<rect x="572" y="40" width="44" height="42" fill="#e4e4e4"/><path d="M572 50h44M572 60h44M572 70h44M582 40v42M592 40v42M602 40v42" stroke-width="1.500"/>
<path d="M626 56h14l-7 8z" fill="#444" stroke="none"/>
<rect x="664" y="40" width="44" height="38" fill="#a9c8e8" stroke="#3a6fa8"/><path d="M664 59h44M686 40v38" stroke="#3a6fa8"/>
<path d="M718 56h14l-7 8z" fill="#444" stroke="none"/>
</g>

<!-- comments -->
<rect x="4.500" y="949" width="299" height="24" fill="#f2f2f2" stroke="#c9c9c9"/><rect x="5" y="948" width="298" height="2" fill="#fff"/>
<text x="29.500" y="965" font-size="10" textLength="56.500" lengthAdjust="spacingAndGlyphs" style="fill:#556">COMMENTS</text>
<circle cx="288" cy="961" r="4.500" fill="#333"/><path d="M285.500 961h5M288 958.500v5" stroke="#fff" stroke-width="1.200"/>

<!-- timeline -->
<rect y="978" width="1920" height="50" fill="#f2f2f2"/>
<rect y="978" width="134" height="1" fill="#c9c9c9"/><rect x="134" y="978" width="1786" height="1" fill="#e0e0e0"/>
<g transform="translate(0,940) scale(.33333)">
<g fill="#444"><rect x="34" y="168" width="5" height="42"/><path d="M70 168v42l-30-21z"/>
<path d="M105 189l28-21v42z"/><rect x="136" y="178" width="6" height="22"/>
<path d="M184 165l34 24-34 24z"/>
<rect x="255" y="178" width="6" height="22"/><path d="M265 168l28 21-28 21z"/>
<path d="M334 168l30 21-30 21z"/><rect x="364" y="168" width="5" height="42"/></g>
<rect x="432" y="138" width="348" height="18" fill="#e48fe0"/>
<path d="M440 180l15-15h22l8 10v24l-8 10h-38v-29z" fill="#c8ccd2" stroke="#555" stroke-width="2.500"/><path d="M450 170l28 10" stroke="#fff" stroke-width="2"/>
<path d="M511 178l12-12h34v30l-12 14h-34z" fill="#ddd" stroke="#555" stroke-width="2.500"/><ellipse cx="528" cy="192" rx="10" ry="14" transform="rotate(30 528 192)" fill="none" stroke="#888" stroke-width="3"/><ellipse cx="541" cy="182" rx="10" ry="14" transform="rotate(30 541 182)" fill="none" stroke="#888" stroke-width="3"/>
<path d="M583 163l20 20M603 163l-20 20" stroke="#d01818" stroke-width="5"/>
<path d="M602 192l8-8h20v18l-8 8h-20z" fill="#6cb2e6" stroke="#3a4a58" stroke-width="2.500"/>
<g fill="#444"><path d="M676 166l8 9h-5v11h11v-5l9 8-9 8v-5h-11v11h5l-8 9-8-9h5v-11h-11v5l-9-8 9-8v5h11v-11h-5z"/><path d="M748 166l8 9h-5v11h11v-5l9 8-9 8v-5h-11v11h5l-8 9-8-9h5v-11h-11v5l-9-8 9-8v5h11v-11h-5z"/></g>
<path d="M768 144h36l-18 26z" fill="#666"/><rect x="783" y="165" width="6" height="75" fill="#666"/>
<path d="M470 236h65v-18" fill="none" stroke="#777" stroke-width="4"/>
<rect x="444" y="222" width="28" height="26" rx="4" fill="#c0c6d0" stroke="#9aa2ac" stroke-width="2"/><rect x="450" y="233" width="15" height="4" fill="#222"/>
<path d="M552 236h200M606 236v-18M678 236v-18M750 236v-18" fill="none" stroke="#c8c8c8" stroke-width="4"/>
</g>
<g transform="translate(1899,1004)"><circle r="4.500" fill="none" stroke="#888" stroke-width="3"/><circle r="6.500" fill="none" stroke="#888" stroke-width="2.500" stroke-dasharray="3 2.100"/></g>
</svg>
</body></html>
